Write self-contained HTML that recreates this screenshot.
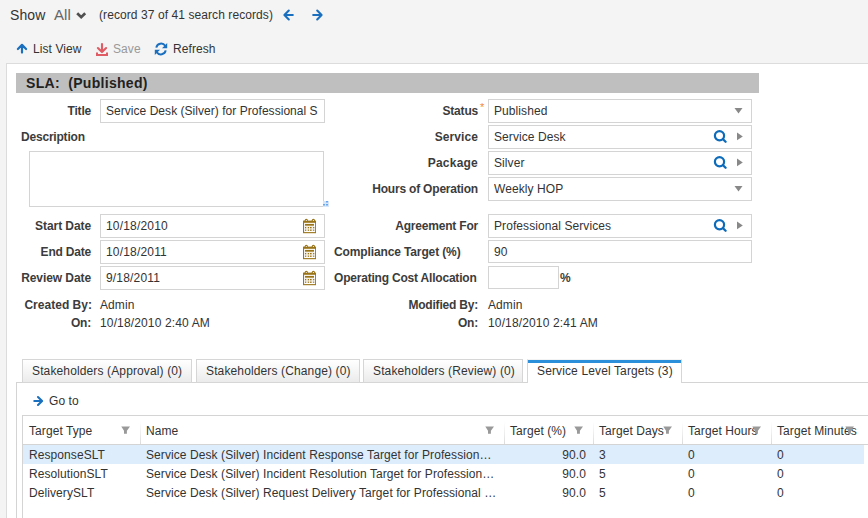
<!DOCTYPE html>
<html><head><meta charset="utf-8">
<style>
*{box-sizing:border-box;margin:0;padding:0}
html,body{width:868px;height:518px;overflow:hidden;background:#f4f4f4;font-family:"Liberation Sans",sans-serif;font-size:12px;color:#333;letter-spacing:0.08px}
.a{position:absolute;white-space:nowrap;line-height:14px}
.b{font-weight:bold;letter-spacing:-0.2px;color:#3c3c3c}
.r{text-align:right}
.inp{position:absolute;background:#fff;border:1px solid #d4d4d4;height:24px}
.inp .t{position:absolute;left:5px;top:4px;line-height:14px;white-space:nowrap;overflow:hidden}
svg{position:absolute;overflow:visible}
.tab{position:absolute;top:359px;height:24px;border:1px solid #d6d6d6;background:linear-gradient(#fff,#ebebeb);padding:4px 0 0 9px;line-height:14px;white-space:nowrap;letter-spacing:0.13px;z-index:2}
.act{background:#fff;border-top-color:#f3f3f3;border-bottom:none;box-shadow:inset 0 3px 0 #2b90d9}
</style></head><body>
<!-- top bar -->
<div class="a" style="left:10px;top:7px;font-size:14px;line-height:16px;color:#333">Show</div>
<div class="a" style="left:54px;top:6px;font-size:15px;line-height:17px;color:#666">All</div>
<svg style="left:76px;top:12px" width="11" height="7" viewBox="0 0 11 7"><path d="M1.2 1.2 L5.2 5.2 L9.2 1.2" fill="none" stroke="#505050" stroke-width="2.7"/></svg>
<div class="a" style="left:99px;top:8px;color:#333;letter-spacing:0.08px">(record 37 of 41 search records)</div>
<svg style="left:283px;top:9px" width="11" height="12" viewBox="0 0 11 12"><path d="M9.8 6 H2 M5.8 1.6 L1.4 6 L5.8 10.4" fill="none" stroke="#1a6fbf" stroke-width="2.1" stroke-linecap="round" stroke-linejoin="round"/></svg>
<svg style="left:312px;top:9px" width="11" height="12" viewBox="0 0 11 12"><path d="M1.2 6 H9 M5.2 1.6 L9.6 6 L5.2 10.4" fill="none" stroke="#1a6fbf" stroke-width="2.1" stroke-linecap="round" stroke-linejoin="round"/></svg>

<!-- toolbar -->
<svg style="left:16px;top:43px" width="12" height="12" viewBox="0 0 12 12"><path d="M6 9.6 V2.2 M1.9 6 L6 1.9 L10.1 6" fill="none" stroke="#1a6fbf" stroke-width="2.2" stroke-linecap="round" stroke-linejoin="round"/></svg>
<div class="a" style="left:33px;top:42px;letter-spacing:0.08px">List View</div>
<svg style="left:95px;top:43px" width="14" height="14" viewBox="0 0 14 14"><path d="M7 1 V8.6 M2.9 5 L7 9.1 L11.1 5" fill="none" stroke="#e05c64" stroke-width="2.1" stroke-linejoin="round" stroke-linecap="round"/><path d="M2 9.5 V12 H12 V9.5" fill="none" stroke="#e05c64" stroke-width="2"/></svg>
<div class="a" style="left:113px;top:42px;color:#999;letter-spacing:0.08px">Save</div>
<svg style="left:154px;top:42px" width="14" height="14" viewBox="0 0 14 14"><path d="M2.3 5.6 A4.9 4.9 0 0 1 11.2 3.8 M11.7 8.4 A4.9 4.9 0 0 1 2.8 10.2" fill="none" stroke="#1a6fbf" stroke-width="2"/><path d="M13.2 1 V6.2 H8 Z M0.8 13 V7.8 H6 Z" fill="#1a6fbf"/></svg>
<div class="a" style="left:173px;top:42px;letter-spacing:0.08px">Refresh</div>

<!-- panel -->
<div style="position:absolute;left:6px;top:63px;width:900px;height:500px;background:#fff;border:1px solid #dcdcdc"></div>
<div style="position:absolute;left:16px;top:73px;width:743px;height:20px;background:#bfbfbf"></div>
<div class="a" style="left:26px;top:75px;font-size:14px;line-height:16px;font-weight:bold;letter-spacing:0.3px;color:#222">SLA:&nbsp; (Published)</div>

<!-- left column -->
<div class="a b r" style="left:0;width:91px;top:104px">Title</div>
<div class="inp" style="left:100px;top:99px;width:225px"><div class="t" style="letter-spacing:0.04px">Service Desk (Silver) for Professional S</div></div>
<div class="a b" style="left:21px;top:130px">Description</div>
<div class="inp" style="left:29px;top:151px;width:295px;height:56px"></div>
<div style="position:absolute;left:323px;top:201px;width:6px;height:6px;background:#d6e6fb"></div><svg style="left:323px;top:201px" width="6" height="6" viewBox="0 0 6 6"><g fill="#6aa5f0"><rect x="3" y="0" width="2" height="1.5"/><rect x="0" y="3" width="2" height="1.5"/><rect x="3" y="3" width="2" height="1.5"/></g></svg>

<div class="a b r" style="left:0;width:91px;top:219px;letter-spacing:-0.08px">Start Date</div>
<div class="inp" style="left:100px;top:214px;width:225px"><div class="t" style="letter-spacing:0.18px">10/18/2010</div></div>
<div class="a b r" style="left:0;width:91px;top:245px">End Date</div>
<div class="inp" style="left:100px;top:240px;width:225px"><div class="t" style="letter-spacing:0.18px">10/18/2011</div></div>
<div class="a b r" style="left:0;width:91px;top:271px;letter-spacing:-0.08px">Review Date</div>
<div class="inp" style="left:100px;top:266px;width:225px"><div class="t" style="letter-spacing:0.18px">9/18/2011</div></div>

<div class="a b r" style="left:0;width:92px;top:298px;letter-spacing:0.02px">Created By:</div>
<div class="a" style="left:100px;top:298px">Admin</div>
<div class="a b r" style="left:0;width:91px;top:316px">On:</div>
<div class="a" style="left:100px;top:316px;letter-spacing:0.14px">10/18/2010 2:40 AM</div>

<!-- right column -->
<div class="a b r" style="left:300px;width:178px;top:104px">Status</div>
<div class="a" style="left:480px;top:100px;color:#f08a3c;font-size:11px">*</div>
<div class="inp" style="left:488px;top:99px;width:264px"><div class="t">Published</div></div>
<div class="a b r" style="left:300px;width:178px;top:130px;letter-spacing:0.08px">Service</div>
<div class="inp" style="left:488px;top:125px;width:264px"><div class="t">Service Desk</div></div>
<div class="a b r" style="left:300px;width:178px;top:156px;letter-spacing:0.22px">Package</div>
<div class="inp" style="left:488px;top:151px;width:264px"><div class="t">Silver</div></div>
<div class="a b r" style="left:300px;width:178px;top:182px">Hours of Operation</div>
<div class="inp" style="left:488px;top:177px;width:264px"><div class="t">Weekly HOP</div></div>
<div class="a b r" style="left:300px;width:178px;top:219px">Agreement For</div>
<div class="inp" style="left:488px;top:214px;width:264px"><div class="t">Professional Services</div></div>
<div class="a b" style="left:334px;top:245px;letter-spacing:-0.125px">Compliance Target (%)</div>
<div class="inp" style="left:488px;top:240px;width:264px;height:23px"><div class="t">90</div></div>
<div class="a b" style="left:334px;top:271px">Operating Cost Allocation</div>
<div class="inp" style="left:488px;top:266px;width:71px;height:23px"></div>
<div class="a b" style="left:560px;top:271px">%</div>

<div class="a b r" style="left:300px;width:178px;top:298px">Modified By:</div>
<div class="a" style="left:488px;top:298px">Admin</div>
<div class="a b r" style="left:300px;width:178px;top:316px">On:</div>
<div class="a" style="left:488px;top:316px;letter-spacing:0.14px">10/18/2010 2:41 AM</div>


<!-- input icons -->
<svg style="left:734px;top:107px" width="9" height="7" viewBox="0 0 9 7"><path d="M0.5 1 H8.5 L4.5 6.5 Z" fill="#888"/></svg>
<svg style="left:734px;top:185px" width="9" height="7" viewBox="0 0 9 7"><path d="M0.5 1 H8.5 L4.5 6.5 Z" fill="#888"/></svg>
<svg style="left:712px;top:129px" width="16" height="16" viewBox="0 0 16 16"><circle cx="7.5" cy="6.7" r="4.6" fill="none" stroke="#0c6bba" stroke-width="2.2"/><path d="M10.8 10 L13.6 12.8" stroke="#0c6bba" stroke-width="2.3" stroke-linecap="round"/></svg>
<svg style="left:736px;top:131px" width="8" height="10" viewBox="0 0 8 10"><path d="M1 1.5 L6.8 5.4 L1 9.3 Z" fill="#888"/></svg>
<svg style="left:712px;top:155px" width="16" height="16" viewBox="0 0 16 16"><circle cx="7.5" cy="6.7" r="4.6" fill="none" stroke="#0c6bba" stroke-width="2.2"/><path d="M10.8 10 L13.6 12.8" stroke="#0c6bba" stroke-width="2.3" stroke-linecap="round"/></svg>
<svg style="left:736px;top:157px" width="8" height="10" viewBox="0 0 8 10"><path d="M1 1.5 L6.8 5.4 L1 9.3 Z" fill="#888"/></svg>
<svg style="left:712px;top:218px" width="16" height="16" viewBox="0 0 16 16"><circle cx="7.5" cy="6.7" r="4.6" fill="none" stroke="#0c6bba" stroke-width="2.2"/><path d="M10.8 10 L13.6 12.8" stroke="#0c6bba" stroke-width="2.3" stroke-linecap="round"/></svg>
<svg style="left:736px;top:220px" width="8" height="10" viewBox="0 0 8 10"><path d="M1 1.5 L6.8 5.4 L1 9.3 Z" fill="#888"/></svg>
<svg style="left:302px;top:218px" width="15" height="16" viewBox="0 0 15 16"><g fill="#9a7418"><rect x="1" y="2.6" width="13" height="12.6"/><circle cx="4.3" cy="2.3" r="1.6"/><circle cx="11.4" cy="2.3" r="1.6"/></g><g fill="#fff"><circle cx="4.3" cy="2.5" r="0.6"/><circle cx="11.4" cy="2.5" r="0.6"/><rect x="2.1" y="4.8" width="11" height="9.3"/></g><g fill="#9a7418"><rect x="3" y="5.9" width="9" height="1.8"/><rect x="3" y="9" width="1.2" height="1.3"/><rect x="5.8" y="9" width="1.2" height="1.3"/><rect x="8" y="9" width="1.6" height="1.3"/><rect x="11.1" y="9" width="1.2" height="1.3"/><rect x="3" y="11.6" width="1.2" height="1.2"/><rect x="5.8" y="11.6" width="1.2" height="1.2"/><rect x="8" y="11.6" width="1.6" height="1.2"/><rect x="11.1" y="11.6" width="1.2" height="1.2"/></g><rect x="3" y="8" width="9.3" height="5" fill="#9a7418" opacity="0.12"/></svg>
<svg style="left:302px;top:244px" width="15" height="16" viewBox="0 0 15 16"><g fill="#9a7418"><rect x="1" y="2.6" width="13" height="12.6"/><circle cx="4.3" cy="2.3" r="1.6"/><circle cx="11.4" cy="2.3" r="1.6"/></g><g fill="#fff"><circle cx="4.3" cy="2.5" r="0.6"/><circle cx="11.4" cy="2.5" r="0.6"/><rect x="2.1" y="4.8" width="11" height="9.3"/></g><g fill="#9a7418"><rect x="3" y="5.9" width="9" height="1.8"/><rect x="3" y="9" width="1.2" height="1.3"/><rect x="5.8" y="9" width="1.2" height="1.3"/><rect x="8" y="9" width="1.6" height="1.3"/><rect x="11.1" y="9" width="1.2" height="1.3"/><rect x="3" y="11.6" width="1.2" height="1.2"/><rect x="5.8" y="11.6" width="1.2" height="1.2"/><rect x="8" y="11.6" width="1.6" height="1.2"/><rect x="11.1" y="11.6" width="1.2" height="1.2"/></g><rect x="3" y="8" width="9.3" height="5" fill="#9a7418" opacity="0.12"/></svg>
<svg style="left:302px;top:270px" width="15" height="16" viewBox="0 0 15 16"><g fill="#9a7418"><rect x="1" y="2.6" width="13" height="12.6"/><circle cx="4.3" cy="2.3" r="1.6"/><circle cx="11.4" cy="2.3" r="1.6"/></g><g fill="#fff"><circle cx="4.3" cy="2.5" r="0.6"/><circle cx="11.4" cy="2.5" r="0.6"/><rect x="2.1" y="4.8" width="11" height="9.3"/></g><g fill="#9a7418"><rect x="3" y="5.9" width="9" height="1.8"/><rect x="3" y="9" width="1.2" height="1.3"/><rect x="5.8" y="9" width="1.2" height="1.3"/><rect x="8" y="9" width="1.6" height="1.3"/><rect x="11.1" y="9" width="1.2" height="1.3"/><rect x="3" y="11.6" width="1.2" height="1.2"/><rect x="5.8" y="11.6" width="1.2" height="1.2"/><rect x="8" y="11.6" width="1.6" height="1.2"/><rect x="11.1" y="11.6" width="1.2" height="1.2"/></g><rect x="3" y="8" width="9.3" height="5" fill="#9a7418" opacity="0.12"/></svg>
<div style="position:absolute;left:16px;top:382px;width:900px;height:200px;border:1px solid #d4d4d4;background:#fff"></div>

<!-- tabs -->
<div class="tab" style="left:22px;width:170px">Stakeholders (Approval) (0)</div>
<div class="tab" style="left:196px;width:164px">Stakeholders (Change) (0)</div>
<div class="tab" style="left:363px;width:160px">Stakeholders (Review) (0)</div>
<div class="tab act" style="left:527px;width:155px">Service Level Targets (3)</div>
<svg style="left:31.7px;top:395px" width="12" height="12" viewBox="0 0 12 12"><path d="M2.3 6 H10 M6 2 L10.1 6 L6 10" fill="none" stroke="#1a6fbf" stroke-width="2.1" stroke-linecap="round" stroke-linejoin="round"/></svg>
<div class="a" style="left:49px;top:394px">Go to</div>

<!-- grid -->
<div style="position:absolute;left:22px;top:415px;width:900px;height:200px;border:1px solid #d4d4d4;background:#fff"></div>
<div style="position:absolute;left:23px;top:444px;width:845px;height:1px;background:#d4d4d4"></div>
<div style="position:absolute;left:23px;top:445px;width:841px;height:19px;background:#deedfc"></div>
<div style="position:absolute;left:140px;top:422px;width:1px;height:22px;background:linear-gradient(#fff,#dcdcdc)"></div>
<div style="position:absolute;left:504px;top:422px;width:1px;height:22px;background:linear-gradient(#fff,#dcdcdc)"></div>
<div style="position:absolute;left:593px;top:422px;width:1px;height:22px;background:linear-gradient(#fff,#dcdcdc)"></div>
<div style="position:absolute;left:682px;top:422px;width:1px;height:22px;background:linear-gradient(#fff,#dcdcdc)"></div>
<div style="position:absolute;left:771px;top:422px;width:1px;height:22px;background:linear-gradient(#fff,#dcdcdc)"></div>
<div class="a" style="left:29px;top:424px">Target Type</div>
<svg style="left:121px;top:426px" width="10" height="9" viewBox="0 0 10 9"><path d="M0.3 0.5 H9 L5.9 4.8 V7.7 H3 V4.8 Z" fill="#999"/></svg>
<div class="a" style="left:146px;top:424px">Name</div>
<svg style="left:485px;top:426px" width="10" height="9" viewBox="0 0 10 9"><path d="M0.3 0.5 H9 L5.9 4.8 V7.7 H3 V4.8 Z" fill="#999"/></svg>
<div class="a" style="left:510px;top:424px">Target (%)</div>
<svg style="left:574px;top:426px" width="10" height="9" viewBox="0 0 10 9"><path d="M0.3 0.5 H9 L5.9 4.8 V7.7 H3 V4.8 Z" fill="#999"/></svg>
<div class="a" style="left:599px;top:424px">Target Days</div>
<svg style="left:663px;top:426px" width="10" height="9" viewBox="0 0 10 9"><path d="M0.3 0.5 H9 L5.9 4.8 V7.7 H3 V4.8 Z" fill="#999"/></svg>
<div class="a" style="left:688px;top:424px">Target Hours</div>
<svg style="left:752px;top:426px" width="10" height="9" viewBox="0 0 10 9"><path d="M0.3 0.5 H9 L5.9 4.8 V7.7 H3 V4.8 Z" fill="#999"/></svg>
<div class="a" style="left:777px;top:424px">Target Minutes</div>
<svg style="left:845px;top:426px" width="10" height="9" viewBox="0 0 10 9"><path d="M0.3 0.5 H9 L5.9 4.8 V7.7 H3 V4.8 Z" fill="#999"/></svg>
<div class="a" style="left:29px;top:448px">ResponseSLT</div>
<div class="a" style="left:146px;top:448px">Service Desk (Silver) Incident Response Target for Profession…</div>
<div class="a r" style="left:500px;width:86px;top:448px">90.0</div>
<div class="a" style="left:599px;top:448px">3</div>
<div class="a" style="left:688px;top:448px">0</div>
<div class="a" style="left:777px;top:448px">0</div>
<div class="a" style="left:29px;top:467px">ResolutionSLT</div>
<div class="a" style="left:146px;top:467px">Service Desk (Silver) Incident Resolution Target for Profession…</div>
<div class="a r" style="left:500px;width:86px;top:467px">90.0</div>
<div class="a" style="left:599px;top:467px">5</div>
<div class="a" style="left:688px;top:467px">0</div>
<div class="a" style="left:777px;top:467px">0</div>
<div class="a" style="left:29px;top:486px">DeliverySLT</div>
<div class="a" style="left:146px;top:486px">Service Desk (Silver) Request Delivery Target for Professional …</div>
<div class="a r" style="left:500px;width:86px;top:486px">90.0</div>
<div class="a" style="left:599px;top:486px">5</div>
<div class="a" style="left:688px;top:486px">0</div>
<div class="a" style="left:777px;top:486px">0</div>
</body></html>
